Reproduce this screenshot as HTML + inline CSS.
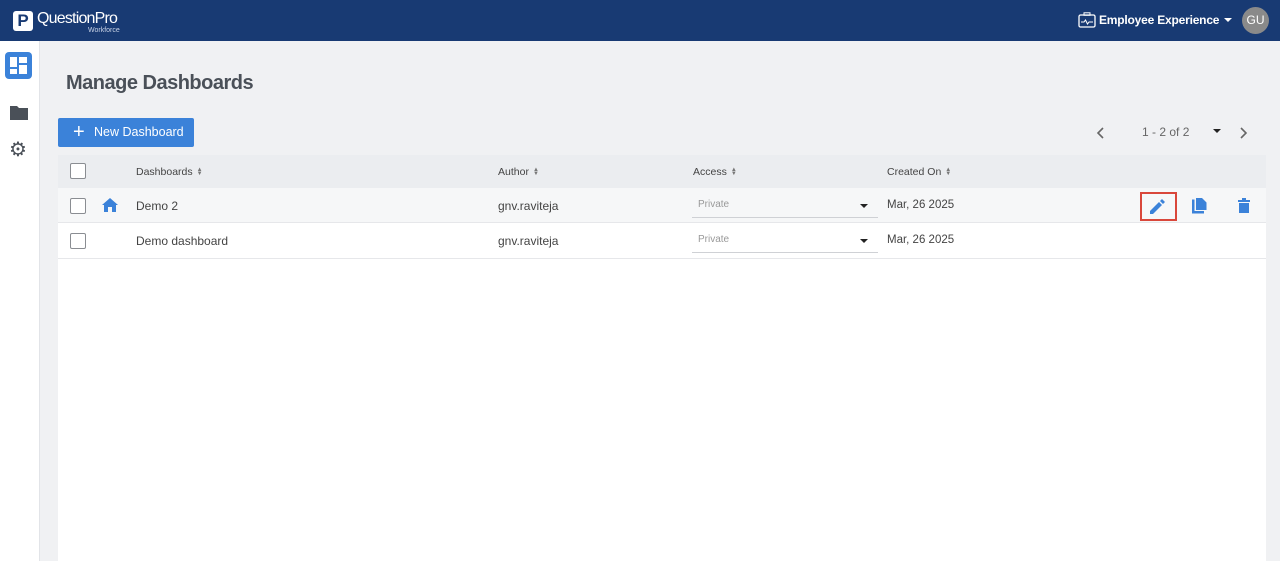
<!DOCTYPE html>
<html><head><style>
*{box-sizing:border-box;margin:0;padding:0}
body{width:1280px;height:561px;overflow:hidden;background:#f0f1f3;font-family:"Liberation Sans",sans-serif;position:relative;color:#444}
.hdr{position:absolute;left:0;top:0;width:1280px;height:41px;background:#183a73}
.side{position:absolute;left:0;top:41px;width:40px;height:520px;background:#fff;border-right:1px solid #e2e4e8}
.abs{position:absolute}
.card{position:absolute;left:58px;top:155px;width:1208px;height:406px;background:#fff}
.th{position:absolute;left:0;top:0;width:1208px;height:33px;background:#ebedf0;font-size:10.5px;color:#444}
.row{position:absolute;left:0;width:1208px;height:35px;border-bottom:1px solid #e6e7ea;font-size:12px;color:#444}
.cb{position:absolute;left:12px;width:16px;height:16px;border:1.5px solid #8a8d92;border-radius:2px;background:#fff}
.sel{position:absolute;left:634px;width:186px;border-bottom:1px solid #cfd1d5;height:28px;font-size:10px;color:#999;padding:9px 0 0 6px}
.sel:after{content:"";position:absolute;right:10px;top:14px;border:4px solid transparent;border-top:4px solid #222}
.sort{display:inline-block;margin-left:4px;font-size:6px;line-height:4px;vertical-align:middle;color:#777}
</style></head><body>
<div class="hdr">
 <div class="abs" style="left:13px;top:11px;width:20px;height:20px;background:#fff;border-radius:3px;color:#183a73;font-weight:bold;font-size:17px;text-align:center;line-height:20px">P</div>
 <div class="abs" style="left:37px;top:10px;color:#fff;font-size:16px;letter-spacing:-0.8px">QuestionPro</div>
 <div class="abs" style="left:88px;top:27px;color:#c9d3e6;font-size:7px">Workforce</div>
 <svg class="abs" style="left:1078px;top:12px" width="18" height="16" viewBox="0 0 18 16"><rect x="1" y="3" width="16" height="12" rx="1.5" fill="none" stroke="#fff" stroke-width="1.3"/><rect x="6" y="0.8" width="6" height="2.5" fill="none" stroke="#fff" stroke-width="1"/><path d="M3 10h3l1.5-2 2 4 1.5-2h4" fill="none" stroke="#fff" stroke-width="1"/></svg>
 <div class="abs" style="left:1099px;top:13px;color:#fff;font-size:12px;font-weight:bold;letter-spacing:-0.2px">Employee Experience</div>
 <div class="abs" style="left:1224px;top:18px;border:4px solid transparent;border-top:4px solid #fff"></div>
 <div class="abs" style="left:1242px;top:7px;width:27px;height:27px;border-radius:50%;background:#8a8a8a;color:#fff;font-size:12px;text-align:center;line-height:27px">GU</div>
</div>
<div class="side">
 <div class="abs" style="left:5px;top:11px;width:27px;height:27px;background:#3b82d9;border-radius:4px"></div>
 <svg class="abs" style="left:9px;top:15px" width="19" height="19" viewBox="0 0 19 19"><rect x="1" y="1" width="7" height="10" fill="#fff"/><rect x="10" y="1" width="8" height="6" fill="#fff"/><rect x="1" y="13" width="7" height="5" fill="#fff"/><rect x="10" y="9" width="8" height="9" fill="#fff"/></svg>
 <svg class="abs" style="left:10px;top:64px" width="18" height="15" viewBox="0 0 18 15"><path d="M0 1h7l2 2h9v12H0z" fill="#4a5058"/></svg>
 <div class="abs" style="left:9px;top:99px;font-size:20px;color:#4a5058;line-height:20px">⚙</div>
</div>
<div class="abs" style="left:66px;top:72px;font-size:20px;font-weight:bold;color:#4a5058;letter-spacing:-0.5px">Manage Dashboards</div>
<div class="abs" style="left:58px;top:118px;width:136px;height:29px;background:#3b82d9;border-radius:2px;color:#fff;font-size:12.5px;line-height:29px;padding-left:36px">New Dashboard</div>
<div class="abs" style="left:73px;top:124px;color:#fff;font-size:20px;line-height:16px">+</div>
<svg class="abs" style="left:1096px;top:127px" width="8" height="12" viewBox="0 0 8 12"><path d="M7 1L2 6l5 5" fill="none" stroke="#666" stroke-width="1.6"/></svg>
<div class="abs" style="left:1142px;top:125px;color:#666;font-size:12px">1 - 2 of 2</div>
<div class="abs" style="left:1213px;top:129px;border:4px solid transparent;border-top:4px solid #222"></div>
<svg class="abs" style="left:1240px;top:127px" width="8" height="12" viewBox="0 0 8 12"><path d="M1 1l5 5-5 5" fill="none" stroke="#666" stroke-width="1.6"/></svg>
<div class="card">
 <div class="th">
  <div class="cb" style="top:8px"></div>
  <div class="abs" style="left:78px;top:11px">Dashboards<span class="sort">▲<br>▼</span></div>
  <div class="abs" style="left:440px;top:11px">Author<span class="sort">▲<br>▼</span></div>
  <div class="abs" style="left:635px;top:11px">Access<span class="sort">▲<br>▼</span></div>
  <div class="abs" style="left:829px;top:11px">Created On<span class="sort">▲<br>▼</span></div>
 </div>
 <div class="row" style="top:33px;background:#f6f7f8">
  <div class="cb" style="top:10px"></div>
  <svg class="abs" style="left:44px;top:10px" width="16" height="14" viewBox="0 0 16 14"><path d="M8 0L0 7h2v7h4V9h4v5h4V7h2z" fill="#3b82d9"/></svg>
  <div class="abs" style="left:78px;top:11px">Demo 2</div>
  <div class="abs" style="left:440px;top:11px">gnv.raviteja</div>
  <div class="sel" style="top:2px">Private</div>
  <div class="abs" style="left:829px;top:11px;font-size:11.5px">Mar, 26 2025</div>
  <div class="abs" style="left:1082px;top:4px;width:37px;height:29px;border:2px solid #d9473b"></div>
  <svg class="abs" style="left:1092px;top:11px" width="15" height="15" viewBox="0 0 15 15"><path d="M0 12v3h3l9-9-3-3zM10 2l3 3 2-2-3-3z" fill="#3b82d9"/></svg>
  <svg class="abs" style="left:1134px;top:10px" width="16" height="17" viewBox="0 0 16 17"><path d="M0 1.5h2.5v11.5h9.5v2.5H0z" fill="#3b82d9"/><path d="M4 0h6l4.5 4.5V12H4z" fill="#3b82d9"/></svg>
  <svg class="abs" style="left:1180px;top:10px" width="12" height="15" viewBox="0 0 12 15"><path d="M0 2h12v2H0zM4 0h4v2H4zM1 5h10v10H1z" fill="#3b82d9"/></svg>
 </div>
 <div class="row" style="top:69px">
  <div class="cb" style="top:9px"></div>
  <div class="abs" style="left:78px;top:10px">Demo dashboard</div>
  <div class="abs" style="left:440px;top:10px">gnv.raviteja</div>
  <div class="sel" style="top:1px">Private</div>
  <div class="abs" style="left:829px;top:10px;font-size:11.5px">Mar, 26 2025</div>
 </div>
</div>
</body></html>
